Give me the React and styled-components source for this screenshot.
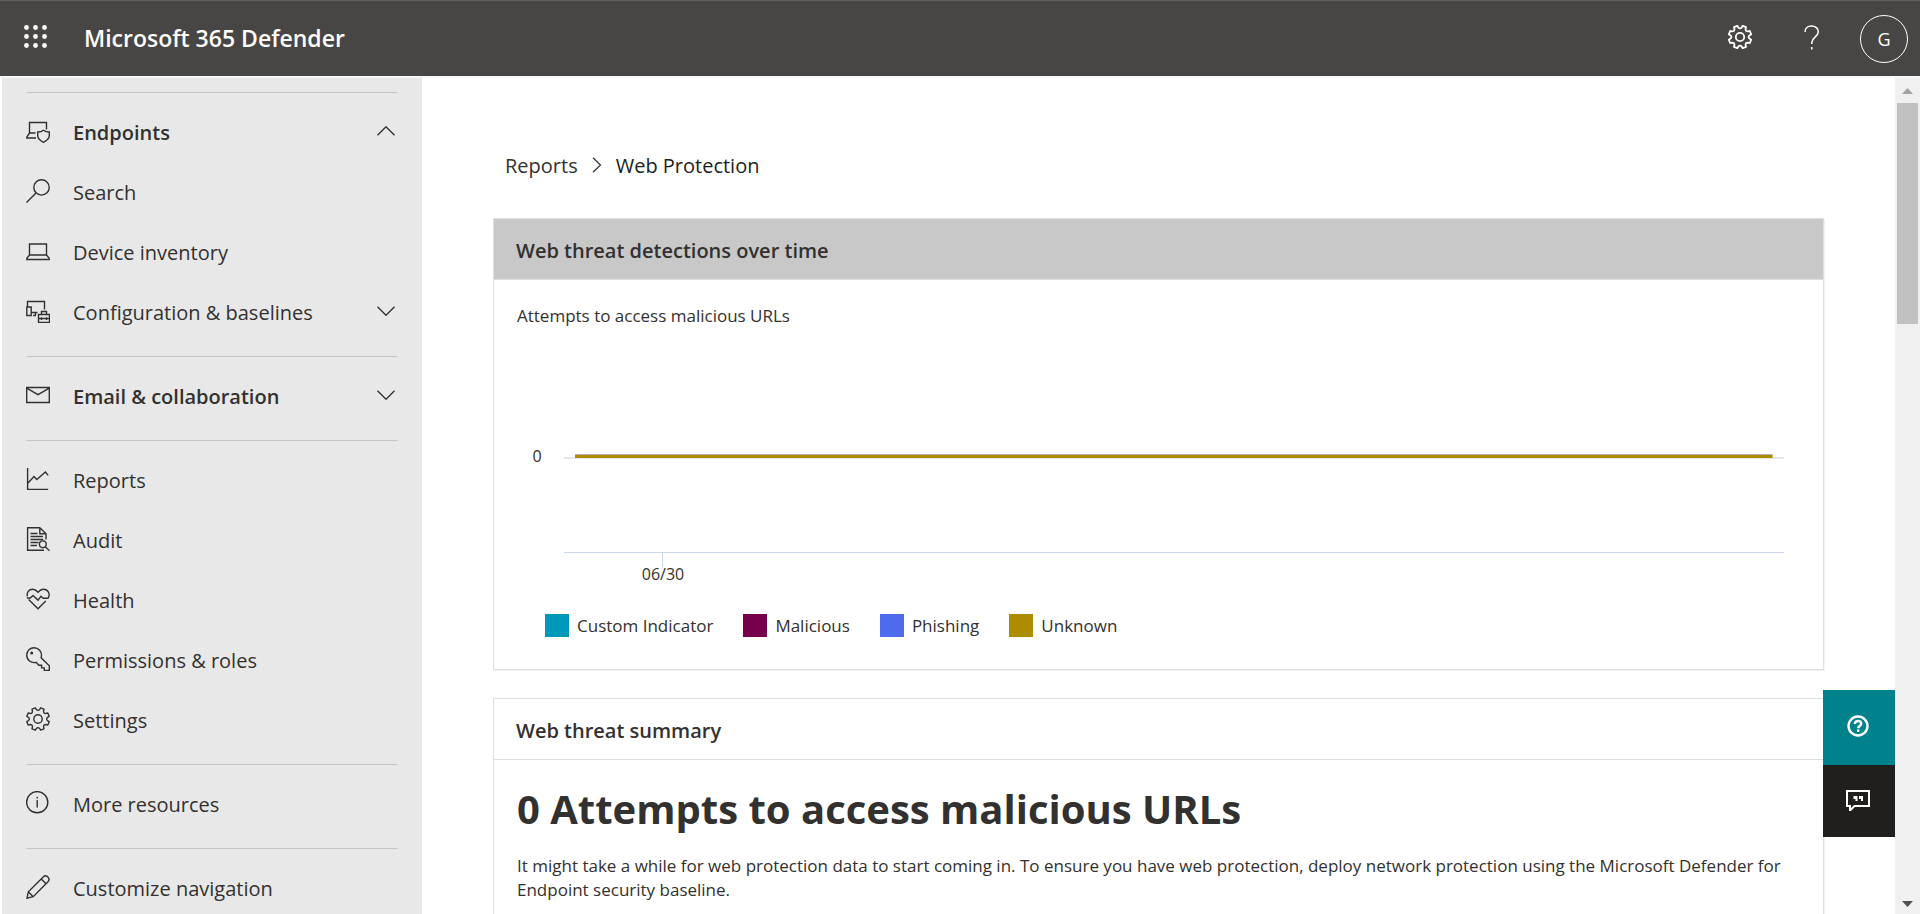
import React from 'react'
import styled, { createGlobalStyle } from 'styled-components'

const GlobalStyle = createGlobalStyle`
  * {
    box-sizing: border-box;
  }
  body {
    margin: 0;
    background: #ffffff;
    color: #323130;
    font-family: 'Open Sans', 'Noto Sans', sans-serif;
  }
  button {
    border: 0;
    padding: 0;
    background: none;
    color: inherit;
    font: inherit;
    cursor: pointer;
  }
  a {
    color: inherit;
    text-decoration: none;
  }
`
const Page = styled.div`
  display: flex;
  flex-direction: column;
  height: 100vh;
  overflow: hidden;
`
const TopBar = styled.header`
  display: flex;
  align-items: center;
  flex: none;
  height: 76px;
  padding: 0 12px 0 23px;
  border-top: 1px solid #605e5c;
  background: #484644;
  color: #ffffff;
`
const Brand = styled.a`
  margin-left: 36px;
  padding-bottom: 2px;
  font-size: 23px;
  font-weight: 600;
  line-height: 32px;
`
const BarButtons = styled.div`
  display: flex;
  align-items: center;
  margin-left: auto;
`
const BarButton = styled.button`
  display: flex;
  align-items: center;
  justify-content: center;
  width: ${props => props.$width || 72}px;
  height: 72px;
  padding-bottom: 3px;
`
const Avatar = styled.button`
  width: 48px;
  height: 48px;
  margin-left: 12px;
  border: 1px solid #ffffff;
  border-radius: 50%;
  font-size: 18px;
  line-height: 46px;
`
const Body = styled.div`
  display: flex;
  flex: 1;
  min-height: 0;
  padding-left: 2px;
  border-top: 2px solid #f8f8f8;
`
const Sidebar = styled.nav`
  flex: none;
  width: 420px;
  padding: 0 24px;
  overflow: hidden;
  background: #e8e8e8;
`
const Divider = styled.hr`
  height: 1px;
  margin: 14px 0 9px;
  border: 0;
  background: #c8c6c4;
`
const NavItem = styled.button`
  display: flex;
  align-items: center;
  gap: 23px;
  width: 100%;
  height: 60px;
  padding: 0 3px 2px 0;
  font-size: 20px;
  font-weight: ${props => (props.$group ? 600 : 400)};
  line-height: 28px;
  text-align: left;

  svg:last-child:not(:first-child) {
    margin-left: auto;
  }
`
const NavLabel = styled.span`
  padding-top: 4px;
`
const Icon = styled.svg`
  flex: none;
  fill: none;
  stroke: currentColor;
  stroke-width: ${props => props.$stroke || 1.4};
`
const Content = styled.main`
  position: relative;
  flex: 1;
  min-width: 0;
  overflow: hidden;
  padding: 74px 71px 0;
`
const Breadcrumb = styled.nav`
  display: flex;
  align-items: center;
  gap: 14px;
  margin-bottom: 38px;
  padding-left: 12px;
  font-size: 20px;
  line-height: 28px;
`
const Current = styled.span`
  color: #201f1e;
`
const Card = styled.section`
  margin-bottom: 28px;
  border: 1px solid #e1dfdd;
  box-shadow: 1px 1px 0 #f3f2f1;
`
const CardTitle = styled.h2`
  margin: 0;
  padding: 18px 22px 14px;
  border-bottom: 1px solid #e1dfdd;
  background: ${props => (props.$selected ? '#c8c8c8' : '#ffffff')};
  font-size: 20px;
  font-weight: 600;
  line-height: 28px;
`
const ChartBody = styled.div`
  padding: 24px 39px 32px 23px;
`
const Text = styled.p`
  margin: 0;
  font-size: 17px;
  line-height: 24px;
`
const Plot = styled.svg`
  display: block;
  width: 100%;
  height: 264px;
  fill: #323130;
  font-size: 16px;
`
const Legend = styled.ul`
  display: flex;
  flex-wrap: wrap;
  gap: 30px;
  margin: 22px 0 0;
  padding: 0 0 0 28px;
  list-style: none;
  font-size: 17px;
  line-height: 23px;
`
const LegendItem = styled.li`
  display: flex;
  gap: 8px;

  &::before {
    content: '';
    width: 24px;
    height: 23px;
    background: ${props => props.$color};
  }
`
const SummaryBody = styled.div`
  padding: 22px 23px 40px;
`
const Total = styled.h1`
  margin: 0 0 18px;
  font-size: 40px;
  font-weight: 700;
  line-height: 54px;
`
// sticks to the right edge of the report, above the cards
const Floating = styled.aside`
  position: absolute;
  right: 0;
  bottom: 77px;
  display: flex;
  flex-direction: column;
  width: 72px;
`
const FloatButton = styled.button`
  display: flex;
  align-items: center;
  justify-content: center;
  height: ${props => props.$height}px;
  padding: 0 2px 3px 0;
  background: ${props => props.$color};
  color: #ffffff;
`
const ScrollTrack = styled.div`
  display: flex;
  flex-direction: column;
  flex: none;
  align-items: center;
  width: 25px;
  background: #f0f0f0;
`
const ScrollThumb = styled.div`
  width: 21px;
  height: 221px;
  margin-bottom: auto;
  background: #c1c1c1;
`
const ScrollArrow = styled.svg`
  flex: none;
  width: 25px;
  height: 25px;
  fill: ${props => props.$color};
`

function gearPath() {
  const point = (deg, r) => {
    const a = (deg * Math.PI) / 180
    return `${(12 + r * Math.cos(a)).toFixed(2)} ${(12 + r * Math.sin(a)).toFixed(2)}`
  }
  let d = ''
  for (let i = 0; i < 8; i++) {
    const a = 22.5 + i * 45
    d += `${i ? 'L' : 'M'}${point(a - 9, 11.5)}L${point(a + 9, 11.5)}`
    d += `L${point(a + 13, 9.6)}Q${point(a + 22.5, 7.8)} ${point(a + 32, 9.6)}`
  }
  return d + 'Z'
}

const icons = {
  endpoints: (
    <>
      <path d="M3.5 14V3.5h17v7M3.5 14L.8 18.2v.8H10M3.5 14h6" />
      <path d="M17.5 11.3c-1.6 1.2-3.6 1.7-5.8 1.7v3.6c0 3 2.2 5 5.8 6.7 3.6-1.7 5.8-3.7 5.8-6.7V13c-2.2 0-4.2-.5-5.8-1.7z" />
    </>
  ),
  search: (
    <>
      <circle cx="15.5" cy="8.4" r="7.7" />
      <path d="M10 14L.5 23.5" />
    </>
  ),
  laptop: <path d="M3.5 16V5h17v11zM3.5 16L.8 19.2v1.3h22.4v-1.3L20.5 16" />,
  config: (
    <>
      <path d="M1.5 8V2.5h17v8M.8 8h4.4v8.5H.8zM5 13.5h6.5M9.5 13.5v3M7 16.5h3" />
      <path d="M12.5 15.5h11v8h-11zM15.5 15.5v-3h5v3M12.5 19.5h11M15.5 18.3v2.6M20.5 18.3v2.6" />
    </>
  ),
  mail: <path d="M.7 4.5h22.6v15H.7zM.7 5.2L12 11.6l11.3-6.4" />,
  reports: <path d="M1.6 1v21.4h20.6M2 16l6-6.4 2.8 3L19.4 5l2.8 3.4" />,
  audit: (
    <>
      <path d="M18 23.3H1.6V.7h12.2l6.2 6.1v5.7M13.8.7v6.1H20" />
      <path d="M4.5 6.5h7M4.5 9.5H17M4.5 12.5h12.8M4.5 15.5h8M4.5 18.5h6.5" />
      <circle cx="16.8" cy="17.3" r="3.4" />
      <path d="M19.2 19.7l4.3 4" />
    </>
  ),
  health: (
    <>
      <path d="M1.4 9.4C.4 5.7 2.8 2.3 6.6 2.3c2.3 0 3.8 1.1 5.4 3 1.6-1.9 3.1-3 5.4-3 4.8 0 7.3 5 4.6 9h-4.8L15 9.3l-3 3.8-5-4.7L4.4 11H.8" />
      <path d="M2.6 12.6L12 21.7l7.8-7.8" />
    </>
  ),
  key: (
    <>
      <path d="M10.2 15.3C5.2 16.8.7 12.9.7 8A7.4 7.4 0 0 1 15.5 8.2c0 1-.1 1.8-.4 2.6l8.2 8v4.7h-5v-2.6h-2.7v-2.7h-2.8z" />
      <circle cx="5.7" cy="6" r=".8" fill="currentColor" />
    </>
  ),
  settings: (
    <>
      <path d={gearPath()} strokeLinejoin="round" />
      <circle cx="12" cy="12" r="4.2" />
    </>
  ),
  info: (
    <>
      <circle cx="11.2" cy="11.2" r="10.6" />
      <path d="M11.2 9v7.5M11.2 5.8v1.6" />
    </>
  ),
  pencil: <path d="M1 23.2l1.3-6.4L17.2 1.900c3-3 7.800 1.800 4.800 4.800L7.200 21.700zM2.300 16.800l4.900 4.900M15.200 3.900l4.900 4.900" />,
}

const navigation = [
  [
    { label: 'Endpoints', icon: 'endpoints', group: true, chevron: 'up' },
    { label: 'Search', icon: 'search' },
    { label: 'Device inventory', icon: 'laptop' },
    { label: 'Configuration & baselines', icon: 'config', chevron: 'down' },
  ],
  [{ label: 'Email & collaboration', icon: 'mail', group: true, chevron: 'down' }],
  [
    { label: 'Reports', icon: 'reports' },
    { label: 'Audit', icon: 'audit' },
    { label: 'Health', icon: 'health' },
    { label: 'Permissions & roles', icon: 'key' },
    { label: 'Settings', icon: 'settings' },
  ],
  [{ label: 'More resources', icon: 'info' }],
  [{ label: 'Customize navigation', icon: 'pencil' }],
]

const series = [
  { name: 'Custom Indicator', color: '#0099bc' },
  { name: 'Malicious', color: '#77004d' },
  { name: 'Phishing', color: '#4f6bed' },
  { name: 'Unknown', color: '#ae8c00' },
]

function Glyph({ name, stroke }) {
  return (
    <Icon width="24" height="24" viewBox="0 0 24 24" $stroke={stroke} aria-hidden="true">
      {icons[name]}
    </Icon>
  )
}

function Chevron({ direction }) {
  return (
    <Icon width="18" height="10" viewBox="0 0 18 10" aria-hidden="true">
      <path d={direction === 'up' ? 'M.5 9.3L9 .8l8.5 8.5' : 'M.5.7L9 9.2 17.5.7'} />
    </Icon>
  )
}

function Header() {
  return (
    <TopBar>
      <BarButton $width={25} aria-label="App launcher">
        <svg width="25" height="26" viewBox="0 0 25 26" fill="#ffffff">
          {[3, 12, 21].map(y => [3, 12, 21].map(x => <circle key={x + '-' + y} cx={x + 0.5} cy={y + 0.5} r="2.4" />))}
        </svg>
      </BarButton>
      <Brand href="#">Microsoft 365 Defender</Brand>
      <BarButtons>
        <BarButton aria-label="Settings">
          <Glyph name="settings" stroke={1.8} />
        </BarButton>
        <BarButton aria-label="Help">
          <Icon width="16" height="25" viewBox="0 0 16 25" $stroke={1.5}>
            <path d="M1 7C1 3.2 3.8 1 7.5 1 11.4 1 14.3 3.3 14.3 6.8c0 5-6.5 5.6-6.5 10.6V19M7.8 22v2.5" />
          </Icon>
        </BarButton>
        <Avatar aria-label="Account">G</Avatar>
      </BarButtons>
    </TopBar>
  )
}

function Navigation() {
  return (
    <Sidebar>
      {navigation.map((items, i) => (
        <React.Fragment key={i}>
          <Divider />
          {items.map(item => (
            <NavItem key={item.label} $group={item.group}>
              <Glyph name={item.icon} />
              <NavLabel>{item.label}</NavLabel>
              {item.chevron && <Chevron direction={item.chevron} />}
            </NavItem>
          ))}
        </React.Fragment>
      ))}
    </Sidebar>
  )
}

function DetectionsChart() {
  return (
    <Plot role="img" aria-label="Attempts to access malicious URLs over time">
      <line x1="47" x2="100%" y1="130" y2="130" stroke="#e6e6e6" strokeWidth="2" />
      <line x1="58" x2="99.1%" y1="126.5" y2="126.5" stroke="#b3b0b8" />
      <line x1="58" x2="99.1%" y1="128.5" y2="128.5" stroke="#ae8c00" strokeWidth="3" />
      <line x1="47" x2="100%" y1="224.5" y2="224.5" stroke="#ccd6eb" />
      <line x1="145.5" x2="145.5" y1="225" y2="239" stroke="#ccd6eb" />
      <text x="20" y="134" textAnchor="middle">0</text>
      <text x="146" y="252" textAnchor="middle">06/30</text>
    </Plot>
  )
}

function Report() {
  return (
    <Content>
      <Breadcrumb aria-label="Breadcrumb">
        <a href="#">Reports</a>
        <Icon width="10" height="18" viewBox="0 0 10 18" $stroke={1.2}>
          <path d="M1 .8L8.5 8 1 15.2" />
        </Icon>
        <Current>Web Protection</Current>
      </Breadcrumb>
      <Card>
        <CardTitle $selected>Web threat detections over time</CardTitle>
        <ChartBody>
          <Text>Attempts to access malicious URLs</Text>
          <DetectionsChart />
          <Legend>
            {series.map(({ name, color }) => (
              <LegendItem key={name} $color={color}>{name}</LegendItem>
            ))}
          </Legend>
        </ChartBody>
      </Card>
      <Card>
        <CardTitle>Web threat summary</CardTitle>
        <SummaryBody>
          <Total>0 Attempts to access malicious URLs</Total>
          <Text>
            It might take a while for web protection data to start coming in. To ensure you have web protection,
            deploy network protection using the Microsoft Defender for Endpoint security baseline.
          </Text>
        </SummaryBody>
      </Card>
      <Floating>
        <FloatButton $height={75} $color="#00828c" aria-label="Need help?">
          <Icon width="22" height="22" viewBox="0 0 22 22" $stroke={2.4}>
            <circle cx="11" cy="11" r="9.5" />
            <path d="M7.9 8.9C7.9 7 9.2 6 11 6s3.2 1.1 3.2 2.8c0 2.2-3 2.3-3 4.4M11.2 14.5V17" />
          </Icon>
        </FloatButton>
        <FloatButton $height={72} $color="#201f1e" aria-label="Give feedback">
          <Icon width="26" height="22" viewBox="0 0 26 22" $stroke={2}>
            <path d="M2 2h22v15H9.5L5 21.5V17H2z" />
            <path d="M8.5 7h4v5h-2V10h-2zM14 7h4v5h-2V10h-2z" fill="currentColor" stroke="none" />
          </Icon>
        </FloatButton>
      </Floating>
    </Content>
  )
}

function Scrollbar() {
  return (
    <ScrollTrack aria-hidden="true">
      <ScrollArrow $color="#a3a3a3" viewBox="0 0 25 25">
        <path d="M7 16l5.500-6 5.500 6z" />
      </ScrollArrow>
      <ScrollThumb />
      <ScrollArrow $color="#505050" viewBox="0 0 25 25">
        <path d="M7 12l5.500 6 5.500-6z" />
      </ScrollArrow>
    </ScrollTrack>
  )
}

export default function App() {
  return (
    <Page>
      <GlobalStyle />
      <Header />
      <Body>
        <Navigation />
        <Report />
        <Scrollbar />
      </Body>
    </Page>
  )
}
